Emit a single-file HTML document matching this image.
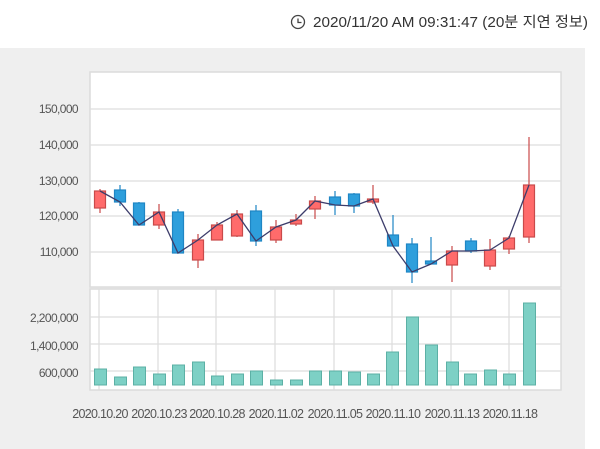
<!DOCTYPE html>
<html><head><meta charset="utf-8"><style>
html,body{margin:0;padding:0;width:600px;height:449px;overflow:hidden;background:#fff;font-family:"Liberation Sans","Noto Sans CJK KR",sans-serif;}
</style></head><body>
<svg width="600" height="449" xmlns="http://www.w3.org/2000/svg" style="position:absolute;left:0;top:0">
<rect x="0" y="48" width="585" height="401" fill="#efefef"/>
<circle cx="298" cy="22" r="6.5" fill="none" stroke="#444" stroke-width="1.3"/>
<path d="M298 18.5V22.5H301.5" fill="none" stroke="#444" stroke-width="1.3"/>
<text x="313" y="27" font-size="14.5" fill="#333" textLength="275" lengthAdjust="spacingAndGlyphs">2020/11/20 AM 09:31:47 (20분 지연 정보)</text>
<rect x="90" y="72" width="471" height="215" fill="#fff" stroke="#dcdcdc" stroke-width="1.5"/>
<rect x="90" y="289" width="471" height="101" fill="#fff" stroke="#dcdcdc" stroke-width="1.5"/>
<g stroke="#dedede" stroke-width="1.3">
<line x1="90" y1="109" x2="561" y2="109"/><line x1="90" y1="145" x2="561" y2="145"/><line x1="90" y1="181" x2="561" y2="181"/><line x1="90" y1="216" x2="561" y2="216"/><line x1="90" y1="252" x2="561" y2="252"/>
<line x1="90" y1="317" x2="561" y2="317"/><line x1="90" y1="344" x2="561" y2="344"/><line x1="90" y1="371" x2="561" y2="371"/>
<line x1="99" y1="289" x2="99" y2="390"/><line x1="158" y1="289" x2="158" y2="390"/><line x1="216" y1="289" x2="216" y2="390"/><line x1="275" y1="289" x2="275" y2="390"/><line x1="334" y1="289" x2="334" y2="390"/><line x1="392" y1="289" x2="392" y2="390"/><line x1="451" y1="289" x2="451" y2="390"/><line x1="509" y1="289" x2="509" y2="390"/>
</g>
<g font-size="12" fill="#555" text-anchor="end" letter-spacing="-0.6">
<text x="78" y="113">150,000</text><text x="78" y="149">140,000</text><text x="78" y="185">130,000</text><text x="78" y="220">120,000</text><text x="78" y="256">110,000</text>
<text x="78" y="322">2,200,000</text><text x="78" y="350">1,400,000</text><text x="78" y="377">600,000</text>
</g>
<g font-size="12.5" fill="#555" text-anchor="middle" letter-spacing="-0.7">
<text x="100" y="418">2020.10.20</text><text x="159" y="418">2020.10.23</text><text x="217" y="418">2020.10.28</text><text x="276" y="418">2020.11.02</text><text x="335" y="418">2020.11.05</text><text x="393" y="418">2020.11.10</text><text x="452" y="418">2020.11.13</text><text x="510" y="418">2020.11.18</text>
</g>
<g fill="#7dd0c5" stroke="#5cb0a5" stroke-width="1">
<rect x="94.5" y="369" width="12" height="16"/><rect x="114.5" y="377" width="12" height="8"/><rect x="133.5" y="367" width="12" height="18"/><rect x="153.5" y="374" width="12" height="11"/><rect x="172.5" y="365" width="12" height="20"/><rect x="192.5" y="362" width="12" height="23"/><rect x="211.5" y="376" width="12" height="9"/><rect x="231.5" y="374" width="12" height="11"/><rect x="250.5" y="371" width="12" height="14"/><rect x="270.5" y="380" width="12" height="5"/><rect x="290.5" y="380" width="12" height="5"/><rect x="309.5" y="371" width="12" height="14"/><rect x="329.5" y="371" width="12" height="14"/><rect x="348.5" y="372" width="12" height="13"/><rect x="367.5" y="374" width="12" height="11"/><rect x="386.5" y="352" width="12" height="33"/><rect x="406.5" y="317" width="12" height="68"/><rect x="425.5" y="345" width="12" height="40"/><rect x="446.5" y="362" width="12" height="23"/><rect x="464.5" y="374" width="12" height="11"/><rect x="484.5" y="370" width="12" height="15"/><rect x="503.5" y="374" width="12" height="11"/><rect x="523.5" y="303" width="12" height="82"/>
</g>
<g stroke-width="1.2">
<g stroke="#c94a4a" fill="#ff6b6b">
<line x1="100" y1="189" x2="100" y2="213"/><rect x="94.5" y="191" width="11" height="17"/>
<line x1="159" y1="204" x2="159" y2="229"/><rect x="153.5" y="212" width="11" height="13"/>
<line x1="198" y1="234" x2="198" y2="268"/><rect x="192.5" y="240" width="11" height="20"/>
<line x1="217" y1="222" x2="217" y2="240"/><rect x="211.5" y="225" width="11" height="15"/>
<line x1="237" y1="210" x2="237" y2="237"/><rect x="231.5" y="214" width="11" height="22"/>
<line x1="276" y1="220" x2="276" y2="243"/><rect x="270.5" y="227" width="11" height="13"/>
<line x1="296" y1="214" x2="296" y2="226"/><rect x="290.5" y="220" width="11" height="4"/>
<line x1="315" y1="196" x2="315" y2="219"/><rect x="309.5" y="201" width="11" height="8"/>
<line x1="373" y1="185" x2="373" y2="204"/><rect x="367.5" y="199" width="11" height="3"/>
<line x1="452" y1="246" x2="452" y2="282"/><rect x="446.5" y="251" width="11" height="14"/>
<line x1="490" y1="239" x2="490" y2="270"/><rect x="484.5" y="250" width="11" height="16"/>
<line x1="509" y1="236" x2="509" y2="254"/><rect x="503.5" y="238" width="11" height="11"/>
<line x1="529" y1="137" x2="529" y2="243"/><rect x="523.5" y="185" width="11" height="52"/>
</g>
<g stroke="#1f86c4" fill="#2e9fdc">
<line x1="120" y1="185" x2="120" y2="206"/><rect x="114.5" y="190" width="11" height="12"/>
<line x1="139" y1="202" x2="139" y2="225"/><rect x="133.5" y="203" width="11" height="22"/>
<line x1="178" y1="209" x2="178" y2="253"/><rect x="172.5" y="212" width="11" height="41"/>
<line x1="256" y1="205" x2="256" y2="246"/><rect x="250.5" y="211" width="11" height="30"/>
<line x1="335" y1="191" x2="335" y2="215"/><rect x="329.5" y="197" width="11" height="8"/>
<line x1="354" y1="193" x2="354" y2="213"/><rect x="348.5" y="194" width="11" height="12"/>
<line x1="393" y1="215" x2="393" y2="246"/><rect x="387.5" y="235" width="11" height="11"/>
<line x1="412" y1="238" x2="412" y2="283"/><rect x="406.5" y="244" width="11" height="28"/>
<line x1="431" y1="237" x2="431" y2="264"/><rect x="425.5" y="261" width="11" height="3"/>
<line x1="471" y1="238" x2="471" y2="253"/><rect x="465.5" y="241" width="11" height="10"/>
</g>
</g>
<polyline fill="none" stroke="#3d3d6b" stroke-width="1.3" points="100,191 120,202 139,225 159,212 178,253 198,240 217,225 237,214 256,241 276,227 296,220 315,201 335,205 354,206 373,199 393,246 412,272 431,264 452,251 471,251 490,250 509,238 529,185"/>
</svg>
</body></html>
